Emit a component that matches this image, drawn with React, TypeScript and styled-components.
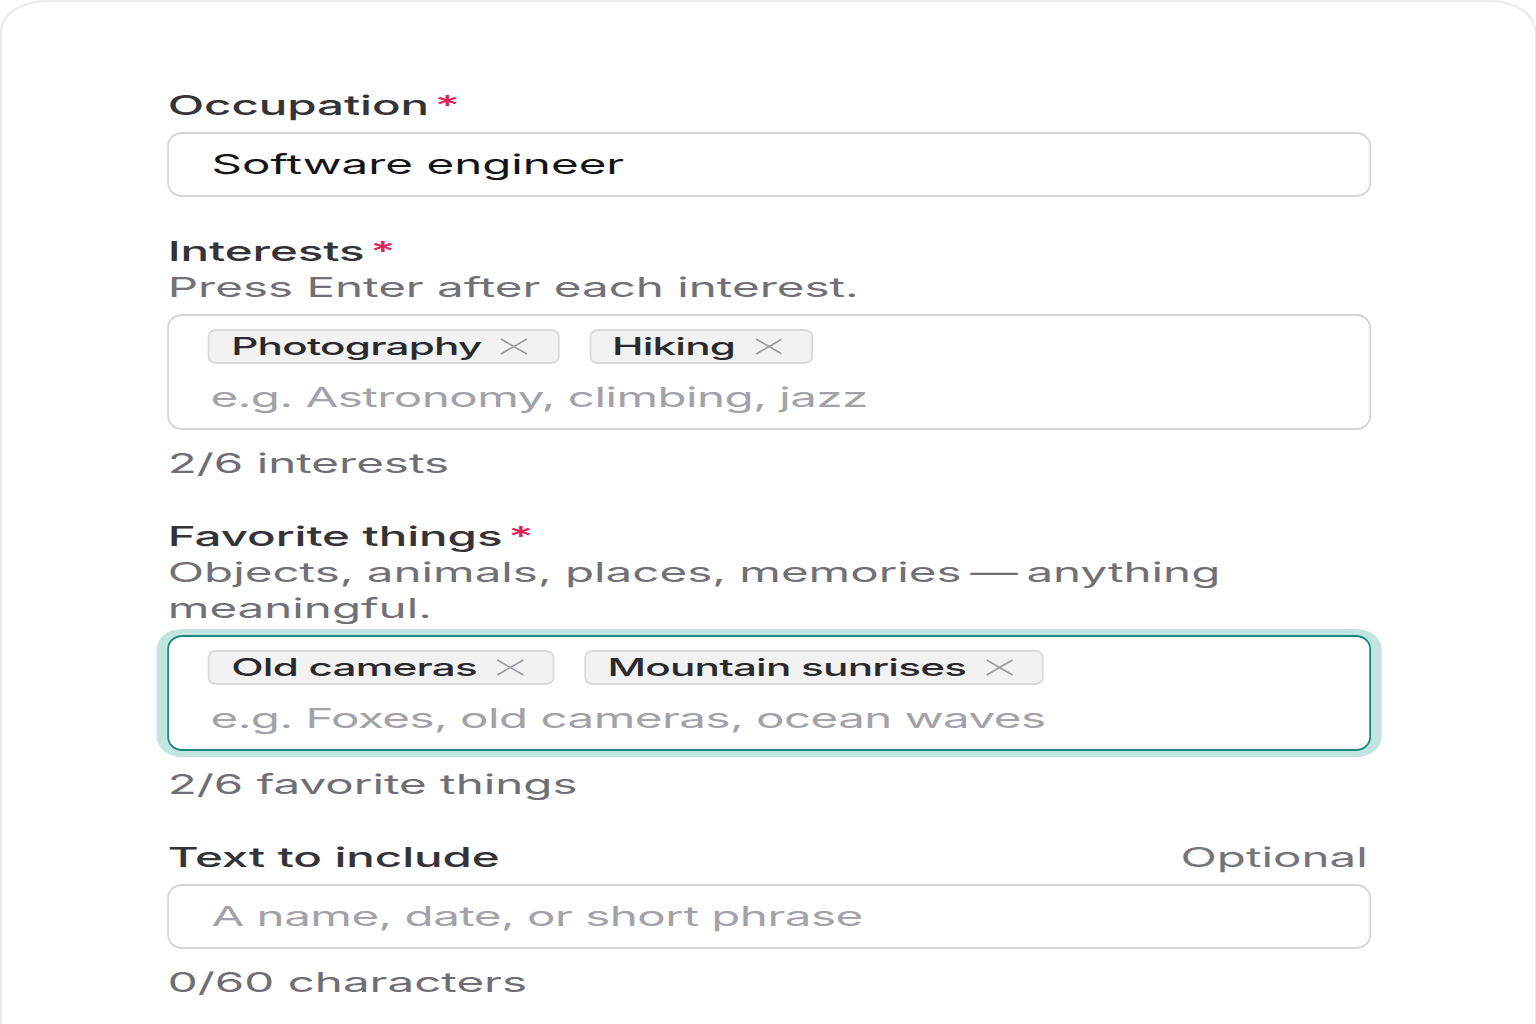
import React from "react";
import styled, { createGlobalStyle } from "styled-components";

const S = 1.76;
const hx = (v: number) => `${(v / S).toFixed(2)}px`;

const Global = createGlobalStyle`
  html, body { margin: 0; padding: 0; background: #ffffff; overflow: hidden; }
  body { font-family: "Inter", "Noto Sans", "Liberation Sans", sans-serif; }
  * { box-sizing: border-box; }
`;

const Page = styled.div`
  width: ${1536 / S}px;
  height: 1024px;
  transform: scaleX(${S});
  transform-origin: 0 0;
  overflow: hidden;
`;

const Card = styled.div`
  width: 100%;
  min-height: 1100px;
  background: #fff;
  border: 2px solid #e9e9e9;
  border-left-width: ${hx(2)};
  border-right-width: ${hx(2)};
  border-bottom: none;
  border-radius: ${hx(46)} ${hx(46)} 0 0 / 32px 32px 0 0;
  padding: 86px 0 0 ${hx(166)};
`;

const Form = styled.div`
  width: ${hx(1203)};
  display: flex;
  flex-direction: column;
  gap: 37px;
  font-size: 27px;
  line-height: 36px;
`;

const Group = styled.div`
  display: flex;
  flex-direction: column;
`;

const LabelRow = styled.div`
  display: flex;
  justify-content: space-between;
  align-items: baseline;
`;

const Label = styled.label`
  color: #333338;
  font-weight: 500;
  letter-spacing: -0.05px;
`;

const Star = styled.span`
  color: #e0245a;
  margin-left: ${hx(6)};
  font-weight: 500;
`;

const Optional = styled.span`
  color: #74747a;
  margin-right: ${hx(3)};
`;

const Help = styled.div`
  color: #707076;
`;

const Dash = styled.span`
  letter-spacing: -4px;
  margin-right: 4px;
`;

const Input = styled.div<{ $muted?: boolean }>`
  margin-top: 8px;
  height: 65px;
  display: flex;
  align-items: center;
  padding-left: ${hx(42)};
  border: 2px solid #d6d6d8;
  border-left-width: ${hx(2)};
  border-right-width: ${hx(2)};
  border-radius: ${hx(15)} / 14px;
  color: ${(p) => (p.$muted ? "#a2a2a8" : "#141416")};
  letter-spacing: ${(p) => (p.$muted ? "-0.3px" : "0")};
`;

const TagBox = styled.div<{ $focused?: boolean }>`
  margin-top: 8px;
  height: 116px;
  display: flex;
  flex-direction: column;
  gap: 16px;
  padding: 13px 0 0 ${hx(39)};
  border: 2px solid ${(p) => (p.$focused ? "#168a7c" : "#d6d6d8")};
  border-left-width: ${hx(2)};
  border-right-width: ${hx(2)};
  border-radius: ${hx(15)} / 14px;
  box-shadow: ${(p) => (p.$focused ? `0 0 0 6px #c2e5df` : "none")};
`;

const ChipRow = styled.div`
  display: flex;
  gap: ${hx(30)};
`;

const Chip = styled.span`
  height: 35px;
  display: inline-flex;
  align-items: center;
  gap: ${hx(19)};
  padding: 0 ${hx(29)} 0 ${hx(21)};
  background: #f2f2f3;
  border: 2px solid #d9d9db;
  border-left-width: ${hx(2)};
  border-right-width: ${hx(2)};
  border-radius: ${hx(9)} / 7px;
  color: #2a2a2e;
  font-size: 24px;
  font-weight: 500;
  letter-spacing: -0.45px;
`;

const Placeholder = styled.div`
  color: #a2a2a8;
  padding-left: ${hx(2)};
  letter-spacing: -0.3px;
`;

const Count = styled.div`
  margin-top: 16px;
  color: #6e6e74;
`;

const XIcon = () => (
  <svg width={28 / S} height="17" viewBox="0 0 28 17" preserveAspectRatio="none" aria-hidden>
    <path d="M1 1 L27 16 M27 1 L1 16" stroke="#9a9aa0" strokeWidth="1.6" fill="none" />
  </svg>
);

const Tag = ({ text }: { text: string }) => (
  <Chip>
    {text}
    <XIcon />
  </Chip>
);

export default function App() {
  return (
    <>
      <Global />
      <Page>
        <Card>
          <Form>
            <Group>
              <Label>
                Occupation<Star>*</Star>
              </Label>
              <Input>Software engineer</Input>
            </Group>

            <Group>
              <Label>
                Interests<Star>*</Star>
              </Label>
              <Help>Press Enter after each interest.</Help>
              <TagBox>
                <ChipRow>
                  <Tag text="Photography" />
                  <Tag text="Hiking" />
                </ChipRow>
                <Placeholder>e.g. Astronomy, climbing, jazz</Placeholder>
              </TagBox>
              <Count>2/6 interests</Count>
            </Group>

            <Group>
              <Label>
                Favorite things<Star>*</Star>
              </Label>
              <Help>
                Objects, animals, places, memories{"\u2009"}
                <Dash>—</Dash>
                {"\u2009"}anything
                <br />
                meaningful.
              </Help>
              <TagBox $focused>
                <ChipRow>
                  <Tag text="Old cameras" />
                  <Tag text="Mountain sunrises" />
                </ChipRow>
                <Placeholder>e.g. Foxes, old cameras, ocean waves</Placeholder>
              </TagBox>
              <Count>2/6 favorite things</Count>
            </Group>

            <Group>
              <LabelRow>
                <Label>Text to include</Label>
                <Optional>Optional</Optional>
              </LabelRow>
              <Input $muted>A name, date, or short phrase</Input>
              <Count>0/60 characters</Count>
            </Group>
          </Form>
        </Card>
      </Page>
    </>
  );
}
